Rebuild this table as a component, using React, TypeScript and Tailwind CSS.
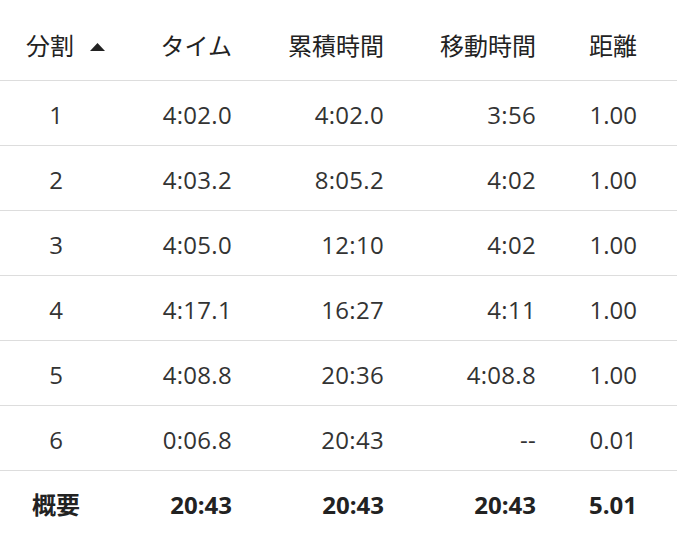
import React from "react";

const rows = [
  ["1", "4:02.0", "4:02.0", "3:56", "1.00"],
  ["2", "4:03.2", "8:05.2", "4:02", "1.00"],
  ["3", "4:05.0", "12:10", "4:02", "1.00"],
  ["4", "4:17.1", "16:27", "4:11", "1.00"],
  ["5", "4:08.8", "20:36", "4:08.8", "1.00"],
  ["6", "0:06.8", "20:43", "--", "0.01"],
];

const font = { fontFamily: '"Open Sans", "Noto Sans CJK JP", sans-serif' };

export default function App() {
  return (
    <div className="w-[677px] h-[536px] bg-white text-[#333333] overflow-hidden" style={font}>
      <div className="grid grid-cols-[112px_120px_152px_152px_101px] h-[81px] items-center border-b border-[#dddddd] text-[24px] text-[#222222] pt-[11px]">
        <div className="pl-[26px] flex items-center">
          <span>分割</span>
          <svg width="15" height="10" viewBox="0 0 15 10" className="ml-[16px] mt-[3px]">
            <polygon points="7.5,1 15,9 0,9" fill="#222222" />
          </svg>
        </div>
        <div className="text-right">タイム</div>
        <div className="text-right">累積時間</div>
        <div className="text-right">移動時間</div>
        <div className="text-right">距離</div>
      </div>
      {rows.map((r) => (
        <div
          key={r[0]}
          className="grid grid-cols-[112px_120px_152px_152px_101px] h-[65px] items-center border-b border-[#dddddd] text-[24px] pt-[3px]"
        >
          <div className="text-center">{r[0]}</div>
          <div className="text-right tracking-[0.3px]">{r[1]}</div>
          <div className="text-right tracking-[0.3px]">{r[2]}</div>
          <div className="text-right tracking-[0.3px]">{r[3]}</div>
          <div className="text-right">{r[4]}</div>
        </div>
      ))}
      <div className="grid grid-cols-[112px_120px_152px_152px_101px] h-[65px] items-center text-[24px] font-bold text-[#222222] pt-[2px]">
        <div className="text-center">概要</div>
        <div className="text-right">20:43</div>
        <div className="text-right">20:43</div>
        <div className="text-right">20:43</div>
        <div className="text-right">5.01</div>
      </div>
    </div>
  );
}
